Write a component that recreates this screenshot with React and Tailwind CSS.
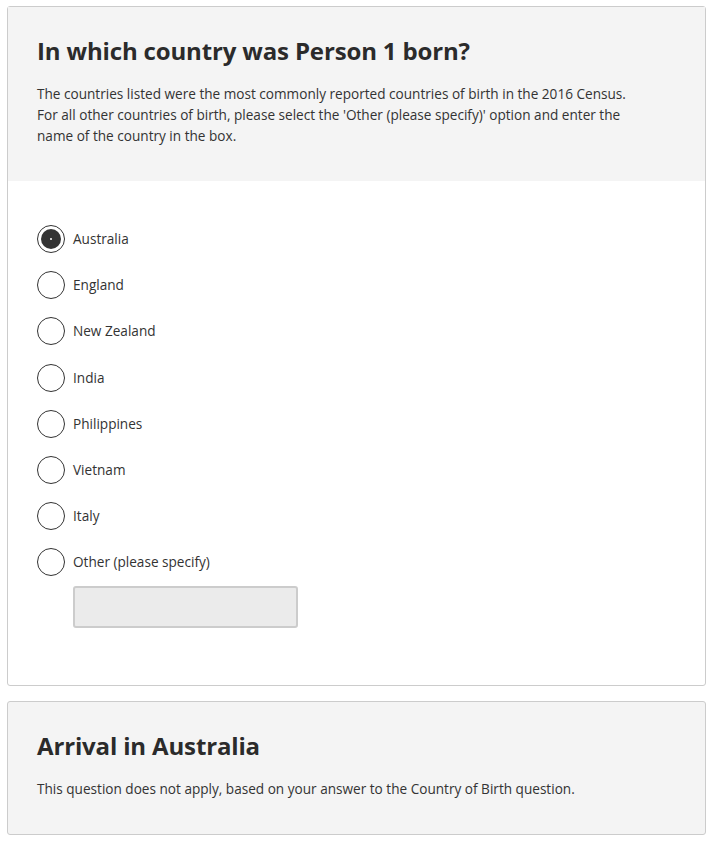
import React from "react";

const options = [
  "Australia",
  "England",
  "New Zealand",
  "India",
  "Philippines",
  "Vietnam",
  "Italy",
  "Other (please specify)",
];

function Radio({ checked }) {
  return (
    <span className="flex h-[28px] w-[28px] shrink-0 items-center justify-center rounded-full border border-[#333]">
      {checked && (
        <span className="flex h-[20px] w-[20px] items-center justify-center rounded-full bg-[#333]">
          <span className="h-[2px] w-[2px] rounded-full bg-white" />
        </span>
      )}
    </span>
  );
}

export default function App() {
  return (
    <div
      className="min-h-[842px] bg-white px-[7px] pt-[6px] text-[#333]"
      style={{ fontFamily: '"Open Sans", "Noto Sans", sans-serif' }}
    >
      <div className="rounded-[3px] border border-[#ccc]">
        <div className="bg-[#f4f4f4] px-[29px] pt-[26px] pb-[35px]">
          <h1 className="text-[24px] font-bold leading-[36px] tracking-[-0.15px] text-[#2b2b2b]">
            In which country was Person 1 born?
          </h1>
          <p className="mt-[14px] text-[13.6px] leading-[21px]">
            The countries listed were the most commonly reported countries of birth in the 2016 Census.
            <br />
            For all other countries of birth, please select the 'Other (please specify)' option and enter the
            <br />
            name of the country in the box.
          </p>
        </div>
        <div className="px-[29px] pt-[44px] pb-[57px]">
          <div className="flex flex-col gap-[18.2px]">
            {options.map((o, i) => (
              <label key={o} className="flex items-center gap-[8px]">
                <Radio checked={i === 0} />
                <span className="text-[13.6px] leading-[20px]">{o}</span>
              </label>
            ))}
          </div>
          <div className="ml-[36px] mt-[10px] h-[42px] w-[225px] rounded-[3px] border-2 border-[#ccc] bg-[#ebebeb]" />
        </div>
      </div>
      <div className="mt-[15px] rounded-[3px] border border-[#ccc] bg-[#f4f4f4] px-[29px] pt-[26px] pb-[35px]">
        <h2 className="text-[24px] font-bold leading-[36px] tracking-[-0.15px] text-[#2b2b2b]">
          Arrival in Australia
        </h2>
        <p className="mt-[14px] text-[13.6px] leading-[21px]">
          This question does not apply, based on your answer to the Country of Birth question.
        </p>
      </div>
    </div>
  );
}
